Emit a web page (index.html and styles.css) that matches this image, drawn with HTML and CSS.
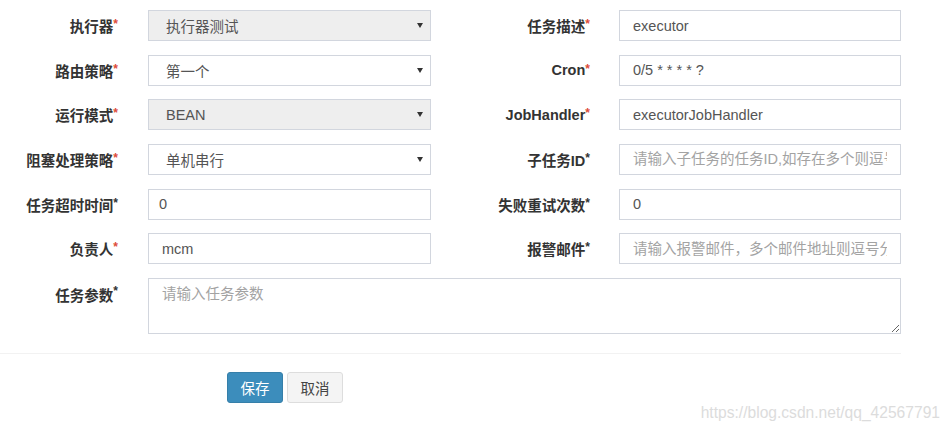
FILE: index.html
```html
<!DOCTYPE html>
<html lang="zh">
<head>
<meta charset="utf-8">
<title>任务编辑</title>
<link rel="stylesheet" href="styles.css">
</head>
<body>
<form class="job-form">
  <div class="grid">
    <label class="lbl">执行器<span class="req">*</span></label>
    <div class="ctrl sel disabled"><span>执行器测试</span><i class="caret"></i></div>
    <label class="lbl lbl-r">任务描述<span class="req">*</span></label>
    <input class="ctrl inp" type="text" value="executor">

    <label class="lbl">路由策略<span class="req">*</span></label>
    <div class="ctrl sel"><span>第一个</span><i class="caret"></i></div>
    <label class="lbl lbl-r">Cron<span class="req">*</span></label>
    <input class="ctrl inp" type="text" value="0/5 * * * * ?">

    <label class="lbl">运行模式<span class="req">*</span></label>
    <div class="ctrl sel disabled"><span>BEAN</span><i class="caret"></i></div>
    <label class="lbl lbl-r">JobHandler<span class="req">*</span></label>
    <input class="ctrl inp" type="text" value="executorJobHandler">

    <label class="lbl">阻塞处理策略<span class="req">*</span></label>
    <div class="ctrl sel"><span>单机串行</span><i class="caret"></i></div>
    <label class="lbl lbl-r">子任务ID<span class="plain">*</span></label>
    <input class="ctrl inp" type="text" placeholder="请输入子任务的任务ID,如存在多个则逗号分隔">

    <label class="lbl">任务超时时间<span class="plain">*</span></label>
    <input class="ctrl inp inp-l" type="text" value="0">
    <label class="lbl lbl-r">失败重试次数<span class="plain">*</span></label>
    <input class="ctrl inp" type="text" value="0">

    <label class="lbl">负责人<span class="req">*</span></label>
    <input class="ctrl inp" type="text" value="mcm">
    <label class="lbl lbl-r">报警邮件<span class="plain">*</span></label>
    <input class="ctrl inp" type="text" placeholder="请输入报警邮件，多个邮件地址则逗号分隔">

    <label class="lbl lbl-top">任务参数<span class="plain">*</span></label>
    <textarea class="ctrl area" placeholder="请输入任务参数"></textarea>
  </div>
  <hr class="sep">
  <div class="actions">
    <button type="button" class="btn btn-primary">保存</button>
    <button type="button" class="btn btn-default">取消</button>
  </div>
</form>
<div class="watermark">https://blog.csdn.net/qq_42567791</div>
</body>
</html>
```

FILE: styles.css
```css
html, body {
  margin: 0;
  padding: 0;
  background: #fff;
}
body {
  width: 948px;
  height: 431px;
  position: relative;
  overflow: hidden;
  font-family: "Liberation Sans", "Noto Sans CJK SC", Arial, sans-serif;
  font-size: 14.5px;
  color: #333;
}
.job-form {
  padding-top: 10px;
}
.grid {
  display: grid;
  grid-template-columns: 148px 283px 188px 282px;
  grid-template-rows: repeat(6, 31px) 56px;
  row-gap: 13.67px;
}
.lbl {
  font-weight: bold;
  color: #333;
  text-align: right;
  padding-right: 30px;
  display: flex;
  align-items: center;
  justify-content: flex-end;
  font-size: 14.5px;
}
.lbl-r {
  padding-right: 29px;
}
.lbl-top {
  align-items: flex-start;
  padding-top: 6px;
  box-sizing: border-box;
}
.req {
  color: #dd4b39;
  font-size: 12px;
  align-self: flex-start;
  margin-top: 7px;
}
.plain {
  color: #333;
  font-size: 12px;
  align-self: flex-start;
  margin-top: 7px;
}
.lbl-top .req, .lbl-top .plain {
  margin-top: 0;
}
.ctrl {
  box-sizing: border-box;
  border: 1px solid #d2d6de;
  background: #fff;
  height: 31px;
  margin: 0;
  font-family: "Liberation Sans", "Noto Sans CJK SC", Arial, sans-serif;
  font-size: 14.5px;
  color: #555;
  outline: none;
  border-radius: 0;
}
.inp {
  width: 100%;
  padding: 0 13px;
}
.inp-l {
  padding-left: 10px;
}
.inp::placeholder, .area::placeholder {
  color: #a3a3a3;
}
.sel {
  display: flex;
  align-items: center;
  justify-content: space-between;
  padding: 0 7px 0 17px;
}
.sel.disabled {
  background: #eee;
}
.caret {
  width: 0;
  height: 0;
  border-left: 3px solid transparent;
  border-right: 3px solid transparent;
  border-top: 5px solid #333;
}
.area {
  grid-column: 2 / 5;
  height: 56px;
  width: 100%;
  padding: 6px 13px;
  resize: vertical;
  line-height: 1.3;
}
.sep {
  width: 901px;
  margin: 19px 0 0 0;
  border: 0;
  border-top: 1px solid #f2f2f2;
}
.actions {
  display: flex;
  gap: 4px;
  margin: 18px 0 0 227px;
}
.btn {
  box-sizing: border-box;
  height: 31px;
  width: 56px;
  border-radius: 3px;
  font-family: "Noto Sans CJK SC", "Liberation Sans", sans-serif;
  font-size: 14.5px;
  padding: 0;
  cursor: pointer;
}
.btn-primary {
  background: #3c8dbc;
  border: 1px solid #367fa9;
  color: #fff;
}
.btn-default {
  background: #f4f4f4;
  border: 1px solid #ddd;
  color: #444;
}
.watermark {
  position: absolute;
  right: 8px;
  top: 404px;
  font-family: "Liberation Sans", Arial, sans-serif;
  font-size: 15.6px;
  color: #dcdcdc;
}
```
